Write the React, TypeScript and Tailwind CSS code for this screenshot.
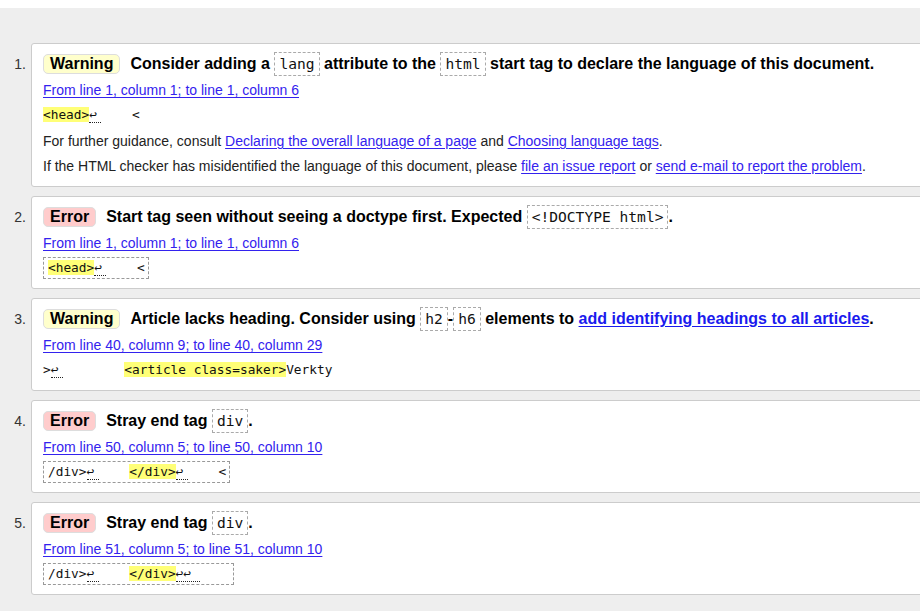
import React from "react";

const sans = "font-['Liberation_Sans',Arial,sans-serif]";
const link = "text-[#3322ee] underline underline-offset-[2px]";

function Code({ children }: { children: React.ReactNode }) {
  return (
    <code className="inline-block border border-dashed border-[#aaa] px-[4px] font-['DejaVu_Sans_Mono',monospace] text-[14.6px] font-normal leading-[22px] text-[#111]">
      {children}
    </code>
  );
}

function Badge({ kind }: { kind: "Warning" | "Error" }) {
  return (
    <span
      className={
        kind === "Warning"
          ? "mr-[10px] rounded-[5px] border border-[#ddd] bg-[#ffffcc] px-[6px] leading-[18px]"
          : "mr-[10px] rounded-[5px] border border-[#ddd] bg-[#ffcccc] px-[6px] leading-[18px]"
      }
    >
      {kind}
    </span>
  );
}

function Nl({ n = 1 }: { n?: number }) {
  return (
    <span
      className={
        n === 1
          ? "inline-block w-[12px] border-b border-dotted border-[#222] leading-[15px]"
          : "inline-block w-[24px] border-b border-dotted border-[#222] leading-[15px]"
      }
    >
      {n === 1 ? "↩" : "↩↩"}
    </span>
  );
}

function Mark({ children }: { children: React.ReactNode }) {
  return <span className="bg-[#ffff77]">{children}</span>;
}

function Extract({ boxed, children }: { boxed?: boolean; children: React.ReactNode }) {
  return (
    <div className="mt-[4px] flex h-[22px] items-center">
      <span
        className={
          boxed
            ? "inline-block whitespace-pre border border-dashed border-[#999] pl-[4px] pr-[3px] font-['DejaVu_Sans_Mono',monospace] text-[12.8px] leading-[20px] text-[#111]"
            : "inline-block whitespace-pre font-['DejaVu_Sans_Mono',monospace] text-[12.8px] leading-[20px] text-[#111]"
        }
      >
        {children}
      </span>
    </div>
  );
}

function Item({ n, children }: { n: number; children: React.ReactNode }) {
  return (
    <li className="flex">
      <div className="w-[26px] shrink-0 pt-[11px] text-right text-[14px] leading-[20px] text-[#333]">{n}.</div>
      <div className="ml-[5px] flex-1 rounded-[3px] border border-[#ccc] bg-white px-[11px] pb-[9px] pt-[9px]">
        {children}
      </div>
    </li>
  );
}

function Title({ kind, children }: { kind: "Warning" | "Error"; children: React.ReactNode }) {
  return (
    <div className="flex h-[22px] items-center whitespace-nowrap text-[16px] font-bold text-black">
      <Badge kind={kind} />
      <span className="leading-[22px]">{children}</span>
    </div>
  );
}

function Where({ children }: { children: React.ReactNode }) {
  return (
    <div className="mt-[5px] text-[14px] leading-[20px]">
      <a className={link}>{children}</a>
    </div>
  );
}

export default function App() {
  return (
    <div className={`${sans} h-[611px] w-[920px] overflow-hidden bg-white pt-[8px]`}>
      <div className="h-full bg-[#eeeeee] pt-[35px]">
        <ol className="flex w-[960px] flex-col gap-[9px]">
          <Item n={1}>
            <Title kind="Warning">
              Consider adding a <Code>lang</Code> attribute to the <Code>html</Code> start tag to declare the language of
              this document.
            </Title>
            <Where>From line 1, column 1; to line 1, column 6</Where>
            <Extract>
              <Mark>{"<head>"}</Mark>
              <Nl />
              {"    <"}
            </Extract>
            <p className="mt-[5px] text-[14px] leading-[20px] text-[#222]">
              For further guidance, consult <a className={link}>Declaring the overall language of a page</a> and{" "}
              <a className={link}>Choosing language tags</a>.
            </p>
            <p className="mb-[1px] mt-[5px] text-[14px] leading-[20px] text-[#222]">
              If the HTML checker has misidentified the language of this document, please{" "}
              <a className={link}>file an issue report</a> or <a className={link}>send e-mail to report the problem</a>.
            </p>
          </Item>

          <Item n={2}>
            <Title kind="Error">
              Start tag seen without seeing a doctype first. Expected <Code>{"<!DOCTYPE html>"}</Code>.
            </Title>
            <Where>From line 1, column 1; to line 1, column 6</Where>
            <Extract boxed>
              <Mark>{"<head>"}</Mark>
              <Nl />
              {"    <"}
            </Extract>
          </Item>

          <Item n={3}>
            <Title kind="Warning">
              Article lacks heading. Consider using <Code>h2</Code>-<Code>h6</Code> elements to{" "}
              <a className="text-[#1a1aee] underline underline-offset-[2px]">add identifying headings to all articles</a>.
            </Title>
            <Where>From line 40, column 9; to line 40, column 29</Where>
            <Extract>
              {">"}
              <Nl />
              {"        "}
              <Mark>{"<article class=saker>"}</Mark>
              {"Verkty"}
            </Extract>
          </Item>

          <Item n={4}>
            <Title kind="Error">
              Stray end tag <Code>div</Code>.
            </Title>
            <Where>From line 50, column 5; to line 50, column 10</Where>
            <Extract boxed>
              {"/div>"}
              <Nl />
              {"    "}
              <Mark>{"</div>"}</Mark>
              <Nl />
              {"    <"}
            </Extract>
          </Item>

          <Item n={5}>
            <Title kind="Error">
              Stray end tag <Code>div</Code>.
            </Title>
            <Where>From line 51, column 5; to line 51, column 10</Where>
            <Extract boxed>
              {"/div>"}
              <Nl />
              {"    "}
              <Mark>{"</div>"}</Mark>
              <Nl n={2} />
              {"    "}
            </Extract>
          </Item>
        </ol>
      </div>
    </div>
  );
}
